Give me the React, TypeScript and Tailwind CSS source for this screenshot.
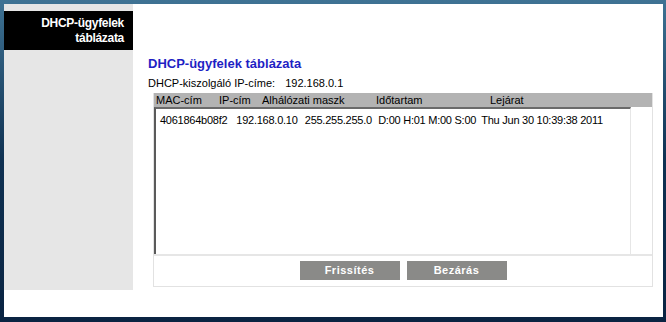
import React from 'react';

const font = { fontFamily: '"Liberation Sans", Arial, sans-serif' };

const headers = [
  { label: 'MAC-cím', w: 'w-[63px]' },
  { label: 'IP-cím', w: 'w-[43px]' },
  { label: 'Alhálózati maszk', w: 'w-[114px]' },
  { label: 'Időtartam', w: 'w-[114px]' },
  { label: 'Lejárat', w: 'w-[120px]' },
];

const row = [
  { v: '4061864b08f2', w: 'w-[77px]' },
  { v: '192.168.0.10', w: 'w-[69px]' },
  { v: '255.255.255.0', w: 'w-[74px]' },
  { v: 'D:00 H:01 M:00 S:00', w: 'w-[104px]' },
  { v: 'Thu Jun 30 10:39:38 2011', w: 'w-[150px]' },
];

export default function App() {
  return (
    <div
      className="w-[666px] h-[322px] bg-gradient-to-b from-[#3f7394] via-[#0f3152] to-[#0a2442] pl-[4px] pt-[4px] pr-[3px] pb-[5px]"
      style={font}
    >
      <div className="flex h-full w-full bg-white">
        {/* Sidebar */}
        <div className="flex w-[129px] flex-col">
          <div className="h-[7px] bg-[#e6e6e6]" />
          <div className="flex h-[39px] flex-col items-end justify-center bg-black pr-[9px] text-[12px] font-bold leading-[15px] tracking-[-0.3px] text-white">
            <span>DHCP-ügyfelek</span>
            <span>táblázata</span>
          </div>
          <div className="h-[240px] bg-[#e6e6e6]" />
        </div>

        {/* Main */}
        <div className="flex-1 pl-[15px] pt-[52px]">
          <h1 className="text-[13px] font-bold leading-[16px] text-[#1f1fc4]">DHCP-ügyfelek táblázata</h1>
          <div className="mt-[5px] flex text-[11px] leading-[13px] text-black">
            <span>DHCP-kiszolgáló IP-címe:</span>
            <span className="ml-[10px]">192.168.0.1</span>
          </div>

          <div className="ml-[5px] mt-[3px] w-[500px] border-x border-b border-[#e2e2e2]">
            <div className="flex h-[14px] items-center bg-[#b3b3b3] pl-[2px] text-[11px] leading-[14px] text-black">
              {headers.map((h) => (
                <span key={h.label} className={h.w}>
                  {h.label}
                </span>
              ))}
            </div>
            <div className="flex border-b-2 border-[#e6e6e6]">
              <div className="h-[147px] w-[477px] border-l-2 border-t-2 border-r border-[#e6e6e6] border-l-[#5a5a5a] border-t-[#6a6a6a] pl-[4px] pt-[4px]">
                <div className="flex text-[11px] leading-[14px] tracking-[-0.25px] text-black whitespace-nowrap">
                  {row.map((c) => (
                    <span key={c.v} className={c.w}>
                      {c.v}
                    </span>
                  ))}
                </div>
              </div>
              <div className="flex-1" />
            </div>
            <div className="flex h-[30px] items-center justify-center gap-[7px] pb-[1px]">
              <button className="h-[19px] w-[100px] bg-[#8a8a88] text-[11px] font-bold tracking-[0.5px] text-white">
                Frissítés
              </button>
              <button className="h-[19px] w-[100px] bg-[#8a8a88] text-[11px] font-bold tracking-[0.5px] text-white">
                Bezárás
              </button>
            </div>
          </div>
        </div>
      </div>
    </div>
  );
}
